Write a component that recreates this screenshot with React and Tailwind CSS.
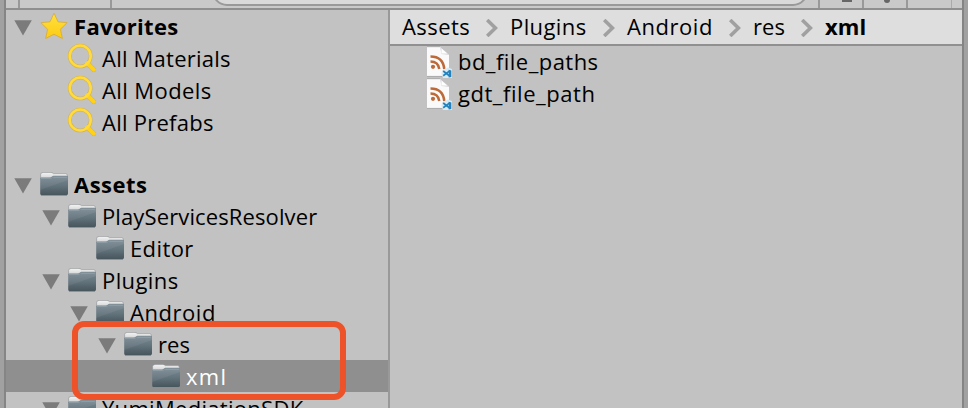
import React from "react";

function Folder() {
  return (
    <svg className="h-6 w-7 shrink-0" viewBox="0 0 28 24">
      <defs>
        <linearGradient id="body" x1="0" y1="0" x2="0" y2="1">
          <stop offset="0" stopColor="#7b8b95" />
          <stop offset="0.5" stopColor="#64747d" />
          <stop offset="1" stopColor="#47555c" />
        </linearGradient>
        <linearGradient id="tab" x1="0" y1="0" x2="0" y2="1">
          <stop offset="0" stopColor="#f4f4f4" />
          <stop offset="1" stopColor="#cfd1d2" />
        </linearGradient>
      </defs>
      <path d="M1 23.6H27" stroke="#8b8f91" strokeWidth="1" />
      <path d="M0.6 7V2.2Q0.6 1 3 0.4H11Q12.4 0.6 13.4 1.6H26Q27.4 2 27.4 3.4V7Z" fill="url(#tab)" stroke="#8d9193" strokeWidth="0.6" />
      <path d="M0.2 6.4Q0.2 5.4 1.2 5.4H9.5Q11 5.4 12 4.4Q12.6 3.8 13.5 3.8H27Q28 3.8 28 4.8V21.5Q28 23 26.5 23H1.5Q0.2 23 0.2 21.5Z" fill="url(#body)" />
      <path d="M1 6.4H10Q11.6 6.4 12.6 5.2H27" fill="none" stroke="#98a6ae" strokeWidth="0.7" />
      <path d="M28 8L0.2 18V6.5H12L14 5H28Z" fill="#fff" opacity="0.06" />
    </svg>
  );
}

function Star() {
  return (
    <svg className="h-7 w-7 shrink-0" viewBox="0 0 28 28">
      <defs>
        <linearGradient id="gold" x1="0" y1="0" x2="0" y2="1">
          <stop offset="0" stopColor="#ffe140" />
          <stop offset="1" stopColor="#fdcb12" />
        </linearGradient>
      </defs>
      <path d="M14 1.2L18 9.8L27 10.7L20.4 17.3L22.4 26.5L14 22.2L5.6 26.5L7.6 17.3L1 10.7L10 9.8Z" fill="url(#gold)" stroke="#d9ae35" strokeWidth="0.9" strokeLinejoin="round" />
    </svg>
  );
}

function Magnifier() {
  return (
    <svg className="h-7 w-7 shrink-0" viewBox="0 0 28 28" fill="none" strokeLinecap="round">
      <path d="M19.5 19.5L25.8 25.6" stroke="#d9b13a" strokeWidth="4.8" />
      <circle cx="12.2" cy="12" r="10.5" stroke="#d9b13a" strokeWidth="3.6" />
      <path d="M19 19L25.8 25.6" stroke="#ffd11c" strokeWidth="4" />
      <circle cx="12.2" cy="12" r="10.5" stroke="#ffdb3d" strokeWidth="2.6" />
    </svg>
  );
}

function FileIcon() {
  return (
    <svg className="h-8 w-[26px] shrink-0" viewBox="0 0 26 32">
      <path d="M1 1H14L23 9V30H1Z" fill="#fafafa" />
      <path d="M1 0.7H14M1 30.4H18" stroke="#a0a0a0" strokeWidth="0.7" />
      <path d="M14 1L15.5 8L23 9Z" fill="#d9d9d9" />
      <path d="M15.5 2.4V7.5H21.2Z" fill="#fff" />
      <g stroke="#bd6a38" strokeWidth="2.5" fill="none">
        <path d="M4.5 10.5Q17 10.5 18.3 23" />
        <path d="M4.5 15.5Q12.2 15.5 13.3 23" />
      </g>
      <circle cx="7" cy="20.8" r="2.1" fill="#bd6a38" />
      <path d="M16 24.2L22 21.6L26 23V32H17L15.5 28Z" fill="#d9eaf3" />
      <path d="M17.2 25L24 30.2M17.2 29.8L24 24.6" stroke="#2382bd" strokeWidth="1.7" />
      <path d="M22.7 23.8L25.3 24.4V31L22.7 31.5Z" fill="#2382bd" />
    </svg>
  );
}

function Arrow() {
  return (
    <svg className="mr-2 mt-[3px] h-4 w-[18px] shrink-0" viewBox="0 0 18 16">
      <path d="M0.3 0.3H17.8L9 15.6Z" fill="#7b7b7b" />
    </svg>
  );
}

function Row({ indent, icon, arrow, label, text, selected }) {
  return (
    <div className={`flex h-8 shrink-0 items-center ${indent} ${selected ? "bg-[#8f8f8f] text-white" : ""}`}>
      {arrow && <Arrow />}
      {icon}
      <span className={`ml-1.5 whitespace-nowrap leading-8 ${text}`}>{label}</span>
    </div>
  );
}

function Chevron() {
  return (
    <svg className="mt-1 h-[18px] w-3 shrink-0" viewBox="0 0 12 18">
      <path d="M1.2 1L9.4 9L1.2 17" fill="none" stroke="#a0a0a0" strokeWidth="3.6" />
    </svg>
  );
}

export default function App() {
  return (
    <div className="flex h-[408px] w-[968px] overflow-hidden bg-[#c2c2c2] font-['Open_Sans','Noto_Sans',sans-serif] text-[22px] text-black">
      <div className="w-1.5 shrink-0 border-r-2 border-[#858585] bg-[#a1a1a1]" />
      <div className="flex w-[956px] shrink-0 flex-col">
        <header className="flex h-2.5 shrink-0 overflow-hidden border-b-2 border-[#8f8f8f] bg-[#c9c9c9]">
          <div className="h-2 w-[14px] shrink-0 border-r-2 border-[#999]" />
          <div className="h-2 w-[92px] shrink-0 border-r-2 border-[#999]" />
          <div className="-mt-6 ml-[100px] h-[30px] w-[596px] shrink-0 rounded-full border-2 border-[#999] bg-[#d9d9d9]" />
          <div className="ml-[4px] h-2 w-2 shrink-0 border-r-2 border-[#999]" />
          <div className="flex h-2 w-11 shrink-0 justify-center border-r-2 border-[#999]">
            <div className="ml-3 h-0.5 w-2.5 bg-[#666]" />
          </div>
          <div className="flex h-2 w-11 shrink-0 justify-center border-r-2 border-[#999]">
            <div className="ml-1 h-[3px] w-1.5 rounded-b-full bg-[#666]" />
          </div>
          <div className="h-2 w-11 shrink-0 border-r border-[#aaa]" />
        </header>
        <div className="flex h-[398px]">
          <aside className="flex w-[384px] shrink-0 flex-col overflow-hidden border-r-2 border-[#999]">
            <Row indent="pl-2" arrow icon={<Star />} label="Favorites" text="font-bold tracking-[0.32px]" />
            <Row indent="pl-[62px]" icon={<Magnifier />} label="All Materials" text="tracking-[0.22px]" />
            <Row indent="pl-[62px]" icon={<Magnifier />} label="All Models" text="tracking-[0.4px]" />
            <Row indent="pl-[62px]" icon={<Magnifier />} label="All Prefabs" text="tracking-[0.25px]" />
            <div className="h-[30px] shrink-0" />
            <Row indent="pl-2" arrow icon={<Folder />} label="Assets" text="font-bold tracking-[0.5px]" />
            <Row indent="pl-9" arrow icon={<Folder />} label="PlayServicesResolver" text="tracking-[0.12px]" />
            <Row indent="pl-[90px]" icon={<Folder />} label="Editor" text="tracking-[0.4px]" />
            <Row indent="pl-9" arrow icon={<Folder />} label="Plugins" text="tracking-[0.4px]" />
            <Row indent="pl-16" arrow icon={<Folder />} label="Android" text="tracking-[0.55px]" />
            <Row indent="pl-[92px]" arrow icon={<Folder />} label="res" text="tracking-[0.1px]" />
            <Row indent="pl-[146px]" icon={<Folder />} label="xml" text="tracking-[1.3px]" selected />
            <Row indent="pl-9" arrow icon={<Folder />} label="YumiMediationSDK" text="tracking-[0.3px]" />
          </aside>
          <main className="flex w-[572px] flex-col">
            <nav className="flex h-9 shrink-0 items-center border-b-2 border-[#909090] bg-[#dedede] pb-0.5 pl-3 leading-8">
              <span className="w-[84px] shrink-0 whitespace-nowrap tracking-[0.45px]">Assets</span>
              <Chevron />
              <span className="ml-3 w-[93px] shrink-0 whitespace-nowrap tracking-[0.4px]">Plugins</span>
              <Chevron />
              <span className="ml-3 w-[102px] shrink-0 whitespace-nowrap tracking-[0.55px]">Android</span>
              <Chevron />
              <span className="ml-3 w-[48px] shrink-0 whitespace-nowrap tracking-[0.1px]">res</span>
              <Chevron />
              <span className="ml-3 whitespace-nowrap font-bold tracking-[0.1px]">xml</span>
            </nav>
            <div className="flex h-8 items-center pl-9">
              <FileIcon />
              <span className="-mt-0.5 ml-1.5 whitespace-nowrap tracking-[0.46px]">bd_file_paths</span>
            </div>
            <div className="flex h-8 items-center pl-9">
              <FileIcon />
              <span className="-mt-0.5 ml-1.5 whitespace-nowrap tracking-[0.54px]">gdt_file_path</span>
            </div>
          </main>
        </div>
      </div>
      <div className="w-1.5 shrink-0 border-l-2 border-[#858585] bg-[#a1a1a1]" />
      <div className="pointer-events-none absolute left-[72px] top-[321px] h-[79px] w-[274px] rounded-[12px] border-[6px] border-[#ee5229]" />
    </div>
  );
}
